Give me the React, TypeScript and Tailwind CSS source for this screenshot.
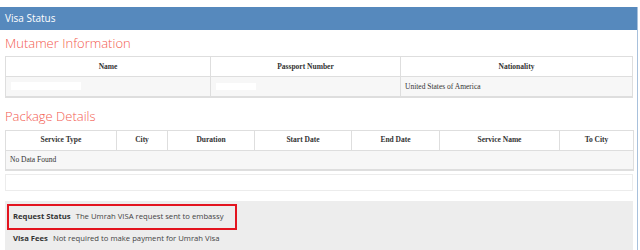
import React from 'react';

const serif = "font-['Liberation_Serif','Times_New_Roman',serif]";

export default function App() {
  const packageCols = [
    { label: 'Service Type', w: 'w-[111px]' },
    { label: 'City', w: 'w-[51px]' },
    { label: 'Duration', w: 'w-[87px]' },
    { label: 'Start Date', w: 'w-[97px]' },
    { label: 'End Date', w: 'w-[88px]' },
    { label: 'Service Name', w: 'w-[120px]' },
    { label: 'To City', w: 'w-[74px]' },
  ];

  return (
    <div className="w-[640px] h-[250px] overflow-hidden bg-white font-['Open_Sans',sans-serif]">
      <div className="pt-[7px]">
        <div className="w-[638px] border-r border-[#a8c1dc]">
          {/* Header */}
          <div className="h-[23px] bg-[#5689bd] flex items-center px-[5px] text-white text-[10px]">
            Visa Status
          </div>

          <div className="pl-[5px] pr-[4px]">
            {/* Mutamer Information */}
            <h2 className="h-[26px] pt-[6px] text-[13px] leading-[15px] font-light text-[#f35b50]">
              Mutamer Information
            </h2>
            <table className={`w-[628px] table-fixed border-collapse border border-b-2 border-[#dedede] ${serif} text-[7.5px] text-[#333]`}>
              <thead>
                <tr className="h-[20px] bg-white">
                  <th className="w-[205px] border border-[#dedede] font-bold">Name</th>
                  <th className="w-[190px] border border-[#dedede] font-bold">Passport Number</th>
                  <th className="border border-[#dedede] font-bold">Nationality</th>
                </tr>
              </thead>
              <tbody>
                <tr className="h-[20px] bg-[#f7f7f7]">
                  <td className="border border-[#dedede] px-[5px]">
                    <div className="w-[70px] h-[8px] bg-white" />
                  </td>
                  <td className="border border-[#dedede] px-[5px]">
                    <div className="w-[40px] h-[7px] bg-white" />
                  </td>
                  <td className="border border-[#dedede] px-[4px]">United States of America</td>
                </tr>
              </tbody>
            </table>

            {/* Package Details */}
            <h2 className="h-[32px] pt-[11px] text-[13px] leading-[15px] font-light text-[#f35b50]">
              Package Details
            </h2>
            <table className={`w-[628px] table-fixed border-collapse border border-b-2 border-[#dedede] ${serif} text-[7.5px] text-[#333]`}>
              <thead>
                <tr className="h-[20px] bg-white">
                  {packageCols.map((c) => (
                    <th key={c.label} className={`${c.w} border border-[#dedede] font-bold`}>
                      {c.label}
                    </th>
                  ))}
                </tr>
              </thead>
              <tbody>
                <tr className="h-[20px] bg-[#f7f7f7]">
                  <td colSpan={7} className="border border-[#dedede] px-[4px]">
                    No Data Found
                  </td>
                </tr>
              </tbody>
            </table>

            {/* Empty box */}
            <div className="mt-[3px] h-[17px] border border-[#ececec]" />

            {/* Status panel */}
            <div className="mt-[10px] h-[60px] bg-[#ededed] pt-[3px] pl-[2px] text-[7.7px] text-[#444]">
              <div className="w-[230px] h-[26px] border-2 border-[#e3141f] flex items-center px-[4px]">
                <span className="font-bold text-[#333]">Request Status</span>
                <span className="ml-[5px]">The Umrah VISA request sent to embassy</span>
              </div>
              <div className="h-[18px] flex items-center px-[6px]">
                <span className="font-bold text-[#333]">Visa Fees</span>
                <span className="ml-[5px]">Not required to make payment for Umrah Visa</span>
              </div>
            </div>
          </div>
        </div>
      </div>
    </div>
  );
}
